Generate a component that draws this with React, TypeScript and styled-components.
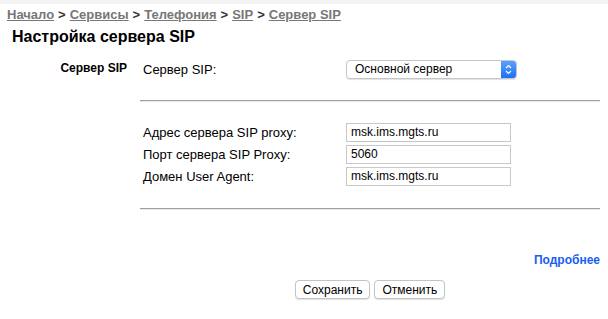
import React from "react";
import styled, { createGlobalStyle } from "styled-components";

const Global = createGlobalStyle`
  html, body { margin: 0; padding: 0; background: #fff; }
  body { font-family: "Liberation Sans", Arial, sans-serif; color: #000; }
`;

const Page = styled.div`
  width: 608px;
  height: 319px;
  overflow: hidden;
  display: flex;
  flex-direction: column;
`;

const TopStrip = styled.div`
  height: 4px;
  background: #f4f4f4;
`;

const Breadcrumb = styled.div`
  padding: 3px 0 0 7px;
  font-size: 13px;
  font-weight: bold;
  color: #333;
  line-height: 15px;
`;

const Crumb = styled.a`
  color: #777;
  text-decoration: underline;
`;

const Sep = styled.span`
  color: #333;
  margin: 0 4px;
`;

const Title = styled.h1`
  margin: 6px 0 0 12px;
  font-size: 16px;
  line-height: 18px;
  font-weight: bold;
`;

const Body = styled.div`
  display: grid;
  grid-template-columns: 140px 460px;
  margin-top: 12px;
`;

const SectionLabel = styled.div`
  font-size: 12px;
  font-weight: bold;
  text-align: right;
  padding: 3px 13px 0 0;
  line-height: 14px;
`;

const Content = styled.div`
  display: flex;
  flex-direction: column;
`;

const Row = styled.div<{ $h: number }>`
  display: grid;
  grid-template-columns: 206px 1fr;
  align-items: center;
  height: ${(p) => p.$h}px;
`;

const Spacer = styled.div<{ $h: number }>`
  height: ${(p) => p.$h}px;
`;

const Label = styled.div`
  font-size: 13px;
  padding-left: 3px;
`;

const Select = styled.div`
  width: 161px;
  height: 17px;
  border: 1px solid #c6c6c6;
  border-radius: 4px;
  display: flex;
  align-items: center;
  justify-content: space-between;
  box-shadow: 0 1px 1px rgba(0,0,0,0.12);
  font-size: 12px;
  padding-left: 8px;
  box-sizing: content-box;
  overflow: hidden;
`;

const Stepper = styled.div`
  width: 15px;
  height: 17px;
  background: linear-gradient(#5aa3fb, #1e6ff3);
  display: flex;
  align-items: center;
  justify-content: center;
`;

const Divider = styled.div`
  height: 1px;
  background: #a0a0a0;
  border-bottom: 1px solid #e8e8e8;
`;

const Input = styled.div`
  width: 159px;
  height: 17px;
  border: 1px solid #c8c8c8;
  font-size: 12px;
  line-height: 17px;
  padding-left: 4px;
  box-sizing: content-box;
`;

const MoreRow = styled.div`
  display: flex;
  justify-content: flex-end;
  padding-right: 8px;
  margin-top: 43px;
`;

const More = styled.a`
  color: #1a5ef0;
  font-size: 12px;
  font-weight: bold;
  text-decoration: none;
`;

const Buttons = styled.div`
  display: flex;
  justify-content: center;
  gap: 4px;
  margin-top: 13px;
  padding-left: 200px;
  width: 340px;
`;

const Button = styled.button`
  font-family: "Liberation Sans", Arial, sans-serif;
  font-size: 12px;
  height: 19px;
  padding: 0 7px;
  background: #fff;
  border: 1px solid #c4c4c4;
  border-radius: 4px;
  box-shadow: 0 1px 1px rgba(0,0,0,0.12);
  color: #000;
`;

export default function App() {
  return (
    <Page>
      <Global />
      <TopStrip />
      <Breadcrumb>
        <Crumb>Начало</Crumb><Sep>&gt;</Sep>
        <Crumb>Сервисы</Crumb><Sep>&gt;</Sep>
        <Crumb>Телефония</Crumb><Sep>&gt;</Sep>
        <Crumb>SIP</Crumb><Sep>&gt;</Sep>
        <Crumb>Сервер SIP</Crumb>
      </Breadcrumb>
      <Title>Настройка сервера SIP</Title>
      <Body>
        <SectionLabel>Сервер SIP</SectionLabel>
        <Content>
          <Row $h={22}>
            <Label>Сервер SIP:</Label>
            <Select>
              <span>Основной сервер</span>
              <Stepper>
                <svg width="7" height="11" viewBox="0 0 7 11">
                  <path d="M1 4 L3.5 1.5 L6 4 M1 7 L3.5 9.5 L6 7" fill="none" stroke="#fff" strokeWidth="1.2" />
                </svg>
              </Stepper>
            </Select>
          </Row>
          <Spacer $h={20} />
          <Divider />
          <Spacer $h={19} />
          <Row $h={22}>
            <Label>Адрес сервера SIP proxy:</Label>
            <Input>msk.ims.mgts.ru</Input>
          </Row>
          <Row $h={22}>
            <Label>Порт сервера SIP Proxy:</Label>
            <Input>5060</Input>
          </Row>
          <Row $h={22}>
            <Label>Домен User Agent:</Label>
            <Input>msk.ims.mgts.ru</Input>
          </Row>
          <Spacer $h={21} />
          <Divider />
        </Content>
      </Body>
      <MoreRow>
        <More>Подробнее</More>
      </MoreRow>
      <Buttons>
        <Button>Сохранить</Button>
        <Button>Отменить</Button>
      </Buttons>
    </Page>
  );
}
